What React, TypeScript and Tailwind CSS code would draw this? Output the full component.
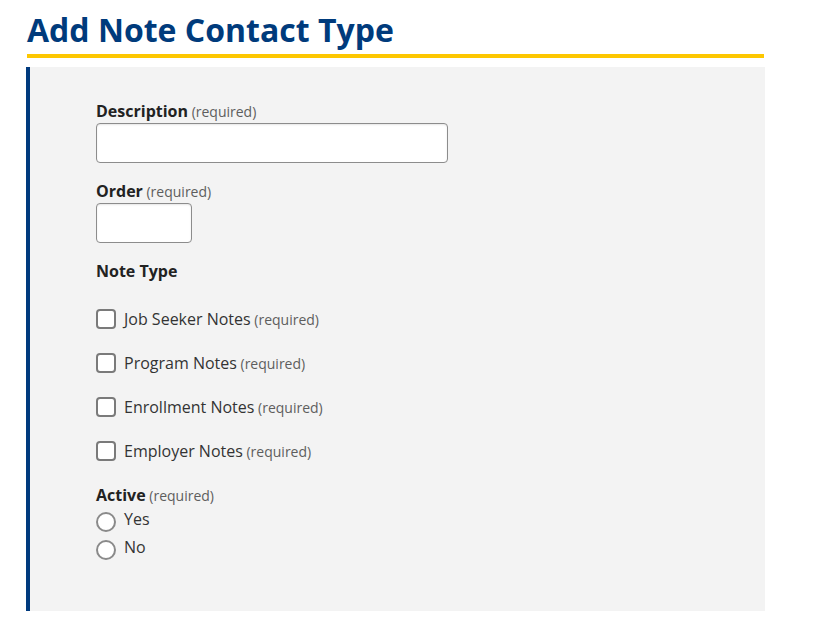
import React from "react";

const font = { fontFamily: '"Open Sans", "Liberation Sans", sans-serif' };

function Req() {
  return <span className="text-[14px] font-normal text-[#5e5e5e]"> (required)</span>;
}

function Check({ label }: { label: string }) {
  return (
    <label className="flex h-6 items-center gap-2 text-[16px] leading-6 text-[#333]">
      <span className="box-border h-5 w-5 rounded-[4px] border-2 border-[#7a7a7a] bg-white" />
      <span>
        {label}
        <Req />
      </span>
    </label>
  );
}

function Radio({ label }: { label: string }) {
  return (
    <label className="flex h-6 items-center gap-2 text-[16px] leading-6 text-[#333]">
      <span className="mt-[6px] box-border h-5 w-5 rounded-full border-2 border-[#8a8a8a] bg-white" />
      <span>{label}</span>
    </label>
  );
}

export default function App() {
  const notes = ["Job Seeker Notes", "Program Notes", "Enrollment Notes", "Employer Notes"];
  return (
    <div className="min-h-[644px] w-[823px] bg-white" style={font}>
      <div className="ml-[26px] w-[739px] pt-[11px] pb-[33px]">
        <h1 className="mx-[1px] border-b-4 border-[#fdc700] pb-[5px] text-[32px] font-bold leading-[38px] text-[#003b7c]">
          Add Note Contact Type
        </h1>
        <div className="mt-[9px] h-[544px] border-l-4 border-[#003a7e] bg-[#f3f3f3] pl-[66px] pt-[33px]">
          <div className="text-[16px] font-bold leading-[23px] text-[#222]">
            Description<Req />
          </div>
          <input className="box-border h-10 w-[352px] rounded-[4px] border border-[#8c8c8c] bg-white shadow-[inset_0_1px_2px_rgba(0,0,0,0.1)]" />

          <div className="mt-[17px] text-[16px] font-bold leading-[23px] text-[#222]">
            Order<Req />
          </div>
          <input className="box-border h-10 w-[96px] rounded-[4px] border border-[#8c8c8c] bg-white shadow-[inset_0_1px_2px_rgba(0,0,0,0.1)]" />

          <div className="mt-4 text-[16px] font-bold leading-6 text-[#222]">Note Type</div>
          <div className="mt-6 flex flex-col gap-5">
            {notes.map((n) => (
              <Check key={n} label={n} />
            ))}
          </div>

          <div className="mt-[21px] text-[16px] font-bold leading-[23px] text-[#222]">
            Active<Req />
          </div>
          <div className="flex flex-col gap-1">
            <Radio label="Yes" />
            <Radio label="No" />
          </div>
        </div>
      </div>
    </div>
  );
}
